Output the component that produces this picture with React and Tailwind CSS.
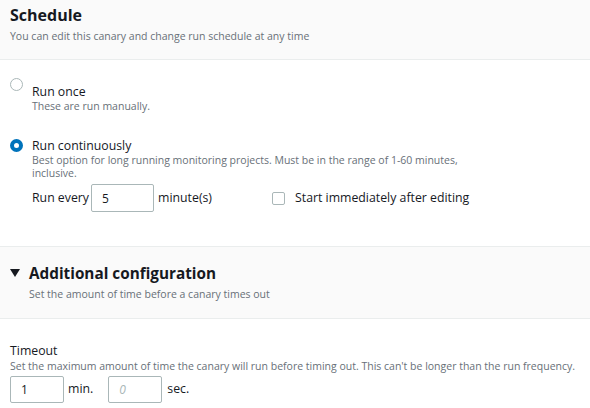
import React, { useState } from 'react';

const font = { fontFamily: '"Open Sans", "Liberation Sans", sans-serif' };

function Radio({ checked }) {
  return checked ? (
    <span className="mt-[2px] box-border h-[13px] w-[13px] shrink-0 rounded-full border-[4px] border-[#0073bb] bg-white" />
  ) : (
    <span className="mt-[2px] box-border h-[13px] w-[13px] shrink-0 rounded-full border border-[#aab7b8] bg-white" />
  );
}

export default function App() {
  const [mode, setMode] = useState('continuous');

  return (
    <div className="h-[408px] w-[590px] overflow-hidden bg-white text-[#16191f]" style={font}>
      {/* Schedule header */}
      <div className="h-[60px] border-b border-[#eaeded] bg-[#fafafa] px-[10px] pt-[4px]">
        <h2 className="text-[16px] font-bold leading-[22px]">Schedule</h2>
        <p className="mt-[3px] text-[10.5px] leading-[14px] text-[#687078]">
          You can edit this canary and change run schedule at any time
        </p>
      </div>

      {/* Run options */}
      <div className="h-[187px] border-b border-[#eaeded] px-[10px] pt-[16px]">
        <div className="flex cursor-pointer gap-[9px]" onClick={() => setMode('once')}>
          <Radio checked={mode === 'once'} />
          <div className="pt-[8px]">
            <div className="text-[12.3px] leading-[16px]">Run once</div>
            <div className="text-[10.5px] leading-[13px] text-[#687078]">These are run manually.</div>
          </div>
        </div>

        <div className="mt-[24px] flex cursor-pointer gap-[9px]" onClick={() => setMode('continuous')}>
          <Radio checked={mode === 'continuous'} />
          <div>
            <div className="text-[12.3px] leading-[17px]">Run continuously</div>
            <div className="w-[470px] text-[10.5px] leading-[13px] text-[#687078]">
              Best option for long running monitoring projects. Must be in the range of 1-60 minutes, inclusive.
            </div>
          </div>
        </div>

        <div className="mt-[4px] flex items-center pl-[22px] text-[12.3px]">
          <span>Run every</span>
          <input
            defaultValue="5"
            className="ml-[2px] h-[28px] w-[63px] rounded-[2px] border border-[#aab7b8] px-[10px] text-[12px] outline-none"
            style={font}
          />
          <span className="ml-[4px]">minute(s)</span>
          <span className="ml-[60px] box-border h-[13px] w-[13px] rounded-[2px] border border-[#aab7b8]" />
          <span className="ml-[10px]">Start immediately after editing</span>
        </div>
      </div>

      {/* Additional configuration */}
      <div className="h-[72px] border-b border-[#eaeded] bg-[#fafafa] px-[10px] pt-[15px]">
        <div className="flex items-center gap-[9px]">
          <svg width="10" height="8" viewBox="0 0 10 8" className="shrink-0">
            <path d="M0 0 L10 0 L5 8 Z" fill="#16191f" />
          </svg>
          <h3 className="text-[15.3px] font-bold leading-[22px]">Additional configuration</h3>
        </div>
        <p className="mt-[3px] pl-[19px] text-[10.5px] leading-[14px] text-[#687078]">
          Set the amount of time before a canary times out
        </p>
      </div>

      {/* Timeout */}
      <div className="px-[10px] pt-[24px]">
        <div className="text-[12.3px] leading-[16px]">Timeout</div>
        <div className="text-[10.5px] leading-[14px] text-[#687078]">
          Set the maximum amount of time the canary will run before timing out. This can't be longer than the run frequency.
        </div>
        <div className="mt-[3px] flex items-center text-[12.3px]">
          <input
            defaultValue="1"
            className="h-[27px] w-[54px] rounded-[2px] border border-[#aab7b8] px-[10px] text-[12px] outline-none"
            style={font}
          />
          <span className="ml-[4px]">min.</span>
          <input
            placeholder="0"
            className="ml-[15px] h-[27px] w-[54px] rounded-[2px] border border-[#aab7b8] px-[10px] text-[12px] italic outline-none placeholder:text-[#aab7b8]"
            style={font}
          />
          <span className="ml-[5px]">sec.</span>
        </div>
      </div>
    </div>
  );
}
